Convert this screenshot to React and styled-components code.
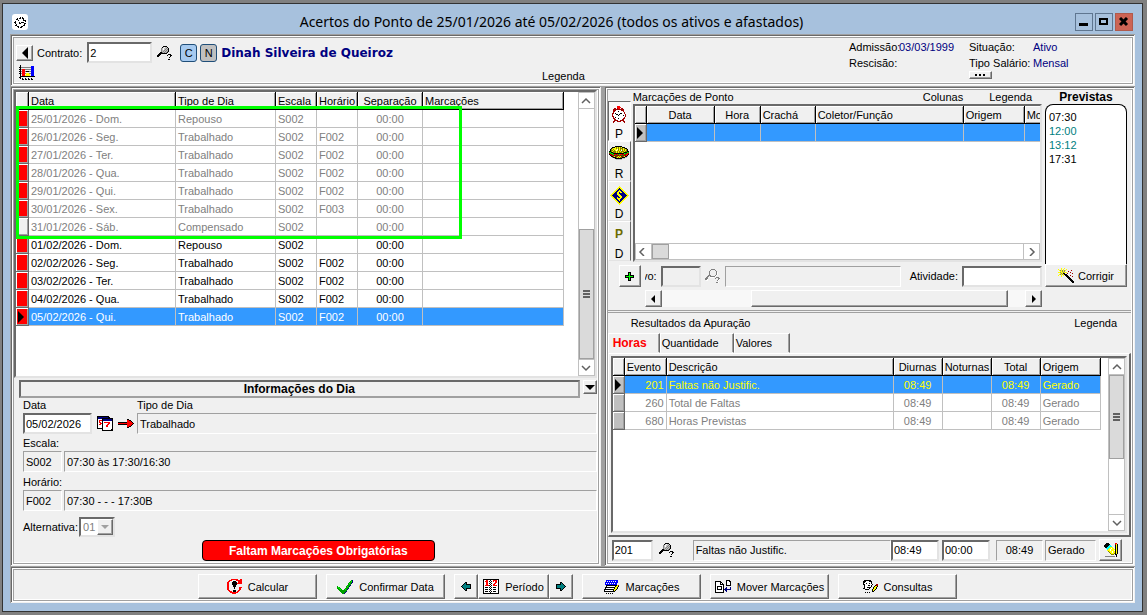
import React from "react";
import styled, { createGlobalStyle, css } from "styled-components";

const COLORS = {
  face: "#f0f0f0",
  shadow: "#a0a0a0",
  dark: "#696969",
  light: "#e3e3e3",
  white: "#ffffff",
  grid: "#c0c0c0",
  select: "#3399ff",
  navy: "#000080",
  gray: "#808080",
  red: "#ff0000",
  yellow: "#ffff00",
  frame: "#a7c1dd",
};

const DAYS = [
  ["25/01/2026 - Dom.", "Repouso", "", "muted"],
  ["26/01/2026 - Seg.", "Trabalhado", "F002", "muted"],
  ["27/01/2026 - Ter.", "Trabalhado", "F002", "muted"],
  ["28/01/2026 - Qua.", "Trabalhado", "F002", "muted"],
  ["29/01/2026 - Qui.", "Trabalhado", "F002", "muted"],
  ["30/01/2026 - Sex.", "Trabalhado", "F003", "muted"],
  ["31/01/2026 - Sáb.", "Compensado", "", "muted", true],
  ["01/02/2026 - Dom.", "Repouso", "", "normal"],
  ["02/02/2026 - Seg.", "Trabalhado", "F002", "normal"],
  ["03/02/2026 - Ter.", "Trabalhado", "F002", "normal"],
  ["04/02/2026 - Qua.", "Trabalhado", "F002", "normal"],
  ["05/02/2026 - Qui.", "Trabalhado", "F002", "selected"],
];

const RESULTS = [
  ["201", "Faltas não Justific.", "08:49", "08:49", "Gerado"],
  ["260", "Total de Faltas", "08:49", "08:49", "Gerado"],
  ["680", "Horas Previstas", "08:49", "08:49", "Gerado"],
];

const PALETTE = {
  K: "#000000",
  R: "#ff0000",
  M: "#a00000",
  W: "#ffffff",
  Y: "#ffff00",
  B: "#0000ff",
  N: "#000080",
  G: "#808080",
  S: "#c0c0c0",
  T: "#008080",
  L: "#00a000",
  E: "#00ff00",
  O: "#808000",
  C: "#00ffff",
};

const ICONS = {
  search: [
    "......KKKK......",
    ".....KSWSSK.....",
    "....GSWSSGSK....",
    "....GSWSGSGK....",
    "....GSSGSGSK....",
    "....GSGSGSGK....",
    "...KKGSGSGK.....",
    "..KKKKKKKK......",
    ".KKK.......KKK..",
    "KKK.......K..KK.",
    "KK...........K..",
    "............K...",
    "................",
    "...........KK...",
  ],
  searchOff: [
    "......GGGG......",
    ".....G....G.....",
    "....G......G....",
    "....G......GW...",
    "....G......GW...",
    "....G......GW...",
    "...GGG....GW....",
    "..GG.GGGGGW.....",
    ".GG..WWWW..GGG..",
    "GGG.......G..GG.",
    "GGW..........GW.",
    ".WW.........GW..",
    "................",
    "...........GGW..",
  ],
  chart: [
    ".K..............",
    ".K..........BBB.",
    "KKGGGGGGGGGGBBB.",
    ".K..........BBB.",
    "KKGRRRGGGGGGBBB.",
    ".K.RRR......BBB.",
    "KKGRRRGKKKGGBBB.",
    ".K.RRR......BBB.",
    "KKGRRRGYYYGGBBB.",
    ".K.RRR.YYYY.BBB.",
    ".K.RRRYYYYY.BBB.",
    ".KKKKKKKKKKKKKKK",
    "KK..............",
    ".K.K..K..K..K...",
    "...KK.KK.KK.KK..",
  ],
  clock: [
    "......RRR.......",
    "......RRRR......",
    "...MM.MRR.MM....",
    "..MMMMMMMMMMM...",
    "..MMMWWWWWMMM...",
    "..MMWWWKWWWWM...",
    "..MWWWWWWWWWWM..",
    ".MMWKWWWWKKWWM..",
    ".MWWWKKWKWWWWWM.",
    ".MWWWWWKWWWWKWM.",
    ".MMWWWWWWWWWWWM.",
    "..MWKWWWWWWWWM..",
    "..MMWWWKWWWWMM..",
    "...MMWWWWWWMM...",
    "...MMMMWWMMMM...",
    "..MM..MMMM..MM..",
    "..M..........M..",
  ],
  burger: [
    "......KKKKKKK.......",
    "...KKKYOYOYOYKKK....",
    "..KOYYYOYOYOOOYOKK..",
    ".KOYOYYYWOYOYOYOYOK.",
    ".KOOYOYWYOYOWOYOYOK.",
    "KKOYOOOYOYOYOOOYOOKK",
    "LEKKOOOYOYOOOYOKKKEL",
    "MLEEKKKKKKKKKKKELLRM",
    "KRMLERRMRLERRMRLMRRK",
    ".KMRMMLLMMRMLLMMMRK.",
    "..KKOYMMOYOYMMOYKKS.",
    "...GKKKOYOYOOKKKSS..",
    ".....SKKKKKKKSSS....",
    ".......SSSSSS.......",
  ],
  money: [
    ".........Y.........",
    "........YYY........",
    ".......YYKYY.......",
    "......YYNNNYY......",
    ".....YYNNYNNYY.....",
    "....YYNNYYYNNYY....",
    "...YYNNYYNYYNNYY...",
    "..YYNNNYYNNNNNNYY..",
    ".YYNNNNYYYNNNNNNYY.",
    "YYNNNNNNYYYNNNNNNYY",
    ".YYNNNNNNYYYNNNNYY.",
    "..YYNNNYNNYYNNNYY..",
    "...YYNNYYYYNNNYY...",
    "....YYNNYYNNNYY....",
    ".....YYNNYNNYY.....",
    "......YYNNNYY......",
    ".......YYKYY.......",
    "........YYY........",
    ".........Y.........",
  ],
  calendar: [
    "KKKKKKKKKKKK....",
    "KNNNNNNNNNNKK...",
    "KNNNNKKKKKKKKKKK",
    "KWWWWKNNNNNNNNNK",
    "KWRRRKNNNNNNNNNK",
    "KWRWWKWWWWWWWWWK",
    "KWRRWKWRRRRRRWWK",
    "KWWRRKWWWWWRRWWK",
    "KWRRWKWWWWRRWWWK",
    "KWWWWKWWWRRWWWWK",
    "KWWWWKWWWRRWWWWK",
    "KWWWWKWWWWWWWWWK",
    "KKKKKKWWWWWWWWWK",
    ".....KWWWWWWWWKK",
    ".....KKKKKKKKKKK",
  ],
  redArrow: [
    ".........KK.....",
    ".........RRKK...",
    ".........RRRRK..",
    "KKKKKKKKKRRRRRK.",
    "RRRRRRRRRRRRRRRK",
    "KKKKKKKKKRRRRRK.",
    ".........RRRRK..",
    ".........RRKK...",
    ".........KK.....",
  ],
  plus: [
    "...KKK...",
    "...KEK...",
    "...KEK...",
    "KKKKEKKKK",
    "KEEEEEEEK",
    "KKKKEKKKK",
    "...KEK...",
    "...KEK...",
    "...KKK...",
  ],
  wand: [
    "...Y..Y.........",
    "Y..Y.Y..Y.......",
    ".YGYGYGY.....M..",
    "..YYGYG...M.....",
    "YYGYYGYYY...M...",
    "..YGYKK..M....M.",
    ".YGYGYKKK.......",
    "Y..Y.Y.KKK..M...",
    "...Y....KKK...M.",
    ".........KKK....",
    "..........KKK...",
    "...........KKK..",
    "............KKK.",
    ".............KKK",
    "..............KK",
  ],
  calc: [
    "....RRRRRRR..RR",
    "..RRR....RRRRRR",
    ".RR...KKK..RRRR",
    "RR...KKKKK.RRRR",
    "RR...KKKKKRRRRR",
    "RR...KKKKK.....",
    "RR....KKK......",
    "RR....KKK......",
    "RR.....K....RRR",
    "RR.....K....RR.",
    "RR..........RR.",
    ".RR...KKK..RR..",
    "..RRR.KKK.RR...",
    "...RRRRRRRR....",
    ".....RRRR......",
  ],
  check: [
    "..............LN",
    ".............LEN",
    "............LLLN",
    "...........LELN.",
    "...........LLL..",
    "..........LLLN..",
    "L........LELN...",
    "LEL......LLL....",
    "LLEL....LLLN....",
    ".LLEL..LELN.....",
    "..LLLLLLLL......",
    "...LLLLLLN......",
    "....LLLLN.......",
    ".....LLN........",
  ],
  left: [
    "....KK....",
    "...KTK....",
    "..KTTKKKKK",
    ".KTTTTTTTK",
    "KTTTTTTTTK",
    ".KTTTTTTTK",
    "..KTTKKKKK",
    "...KTK....",
    "....KK....",
  ],
  period: [
    "KKKKKKKKKKKKKKKK",
    "KWWRRWWKWWRRRRWK",
    "KWRRRWKWKWRWRRWK",
    "KWWRRWWKWWWWRRWK",
    "KWWRRWKWKWWRRWWK",
    "KWWRRWWKWWRRWWWK",
    "KWRRRRKWKWRRRRWK",
    "KWWWWWWKWWWWWWWK",
    "KWKKKWKWKWKKKWWK",
    "KWWWWWWKWWWWWWWK",
    "KWKKKWKWKWKKKWWK",
    "KWWWWWWKWWWWWWWK",
    "KWKKKWKWKWKKKWWK",
    "KWWWWWWKWWWWWWWK",
    "KKKKKKKKKKKKKKKK",
  ],
  marks: [
    "..BBBBBBBBBBBB..",
    "..BWBWBWBWBWBB..",
    ".BBBBBBBBBBBBB..",
    ".BWBWBWBWBWBB...",
    ".BBBBBBBBBBBB...",
    "..KKKKKKKKKKKYM.",
    "..KWWWWWWWWKYYK.",
    ".KKKKKKKKKKYYK..",
    ".KWWWWWWWWKYYK..",
    "KKKKKKKKKKYYK...",
    "KWWWWWWWWKYK....",
    "KKKKKKKKKKK.....",
    "................",
    "..K.K.K.K.......",
  ],
  move: [
    "...........KKKK.",
    "KKKKKK.....KWWKK",
    "KWWWWKK....KWWWK",
    "KWWWWKWK...KWWWK",
    "KWWWWKKKK..KWWWK",
    "KWWWWWWWK..KKKKK",
    "KWKKKKKWK.......",
    "KWKWWWKWK..N...N",
    "KWKWWWKWK.NN...N",
    "KWKKKKKWKNNNNNNN",
    "KWWWWWWWK.NN....",
    "KWWWWWWWK..N....",
    "KKKKKKKKK.......",
  ],
  consult: [
    ".KKKKKKK.......",
    "KKKWWWKKK......",
    "KKWWWWWWK......",
    "KWWKWWKWK......",
    "KKWWWWWWWK...MM",
    ".KWWWKKWK...KMM",
    ".KWWWWWWK..KYYK",
    ".KWWKKKK..KYYK.",
    "KKWWWWK...KYYK.",
    "..KKKK...KYYK..",
    ".........KYK...",
    ".........KK....",
    "..K.K.K........",
  ],
  edit: [
    "..KKK......RR.",
    ".KKKKK.....MYK",
    "KKKKKCC....KYK",
    "KKKKCCCC...KYK",
    ".KKCCCYYY..KYK",
    "..CCCYYWYY.KYK",
    "...CYYWYYYYKYK",
    "...YYYWYYYWKYK",
    "....OYYYWYYKYK",
    ".....OYYWYYKYK",
    "......OYYYOKYK",
    ".......OOO.KK.",
    "............K.",
    ".GGGGGGGGGG.K.",
  ],
  gear: [
    "......K.K...",
    "...K.KK.KK..",
    "..KK.....K..",
    "....K....KKK",
    ".K.........K",
    "KK...K.KKK..",
    ".K...KK...KK",
    "..K.......K.",
    ".KK......KK.",
    "...KK..KK...",
    "....K.KK....",
  ],
};

const PixelIcon = ({ name, flip }) => {
  const rows = ICONS[name];
  const width = Math.max(...rows.map((row) => row.length));
  return (
    <svg
      width={width}
      height={rows.length}
      viewBox={`0 0 ${width} ${rows.length}`}
      shapeRendering="crispEdges"
      aria-hidden="true"
    >
      <g transform={flip ? `translate(${width} 0) scale(-1 1)` : undefined}>
        {rows.map((row, y) =>
          [...row].map((key, x) =>
            PALETTE[key] ? (
              <rect key={`${x}-${y}`} x={x} y={y} width="1" height="1" fill={PALETTE[key]} />
            ) : null
          )
        )}
      </g>
    </svg>
  );
};

const Triangle = ({ dir, size = 4, color = "#000" }) => {
  const s = size;
  const shapes = {
    right: [s, s * 2, `0,0 ${s},${s} 0,${s * 2}`],
    left: [s, s * 2, `${s},0 0,${s} ${s},${s * 2}`],
    down: [s * 2, s, `0,0 ${s * 2},0 ${s},${s}`],
  };
  const [w, h, points] = shapes[dir];
  return (
    <svg width={w} height={h} aria-hidden="true">
      <polygon points={points} fill={color} />
    </svg>
  );
};

const CHEVRONS = {
  up: "M1 6 L5 2 L9 6",
  down: "M1 2 L5 6 L9 2",
  left: "M6 0 L2 4 L6 8",
  right: "M3 0 L7 4 L3 8",
};

const Chevron = ({ dir }) => (
  <svg width="10" height="8" aria-hidden="true">
    <path d={CHEVRONS[dir]} fill="none" stroke="#606060" strokeWidth="1.5" />
  </svg>
);

const Scroll = ({ horizontal, offset, size, grip }) => (
  <ScrollBar $horizontal={horizontal}>
    <ScrollButton aria-label="Anterior">
      <Chevron dir={horizontal ? "left" : "up"} />
    </ScrollButton>
    <ScrollTrack $horizontal={horizontal}>
      <ScrollThumb $horizontal={horizontal} $offset={offset} $size={size}>
        {grip && <Grip />}
      </ScrollThumb>
    </ScrollTrack>
    <ScrollButton aria-label="Próximo">
      <Chevron dir={horizontal ? "right" : "down"} />
    </ScrollButton>
  </ScrollBar>
);

const Header = () => (
  <HeaderPanel>
    <Contract>
      <ContractRow>
        <RaisedButton $width={17} $height={16} aria-label="Voltar">
          <Triangle dir="left" size={6} />
        </RaisedButton>
        <label htmlFor="contrato">Contrato:</label>
        <Input id="contrato" $width={65} defaultValue="2" />
        <IconButton aria-label="Pesquisar contrato">
          <PixelIcon name="search" />
        </IconButton>
        <Flag $color="#a6caf0">C</Flag>
        <Flag $color="#c0c0c0">N</Flag>
        <Employee>Dinah Silveira de Queiroz</Employee>
      </ContractRow>
      <IconButton aria-label="Gráfico">
        <PixelIcon name="chart" />
      </IconButton>
    </Contract>
    <HeaderLegend>
      <TextButton>Legenda</TextButton>
    </HeaderLegend>
    <Facts>
      <dt>Admissão:</dt>
      <dd>03/03/1999</dd>
      <dt>Situação:</dt>
      <dd>Ativo</dd>
      <dt>Rescisão:</dt>
      <dd />
      <dt>Tipo Salário:</dt>
      <dd>Mensal</dd>
      <MoreButton aria-label="Mais">
        <svg width="11" height="2" aria-hidden="true">
          <path d="M0 1h2M4 1h2M8 1h2" stroke="#000" strokeWidth="2" />
        </svg>
      </MoreButton>
    </Facts>
  </HeaderPanel>
);

const DayGrid = () => (
  <GridBox $grow>
    <GridView>
      <Table $width={548}>
        <colgroup>
          {[13, 147, 100, 41, 41, 65, 141].map((w, i) => (
            <col key={i} width={w} />
          ))}
        </colgroup>
        <thead>
          <tr>
            <Th />
            <Th>Data</Th>
            <Th>Tipo de Dia</Th>
            <Th>Escala</Th>
            <Th>Horário</Th>
            <Th $align="center">Separação</Th>
            <Th>Marcações</Th>
          </tr>
        </thead>
        <tbody>
          {DAYS.map(([date, type, shift, state, clear]) => (
            <Row key={date} $state={state}>
              <Marker $color={clear ? COLORS.face : COLORS.red}>
                {state === "selected" && <Triangle dir="right" size={6} />}
              </Marker>
              <Td>{date}</Td>
              <Td>{type}</Td>
              <Td>S002</Td>
              <Td>{shift}</Td>
              <Td $align="center">00:00</Td>
              <Td />
            </Row>
          ))}
        </tbody>
      </Table>
      <Highlight />
    </GridView>
    <Scroll offset={120} size={130} grip />
  </GridBox>
);

const DayInfo = () => (
  <InfoPanel>
    <InfoBar>
      <InfoTitle>Informações do Dia</InfoTitle>
      <RaisedButton $width={14} $height={14} aria-label="Recolher">
        <Triangle dir="down" size={5} />
      </RaisedButton>
    </InfoBar>
    <InfoRow>
      <Field>
        <label htmlFor="data">Data</label>
        <Input id="data" $width={69} defaultValue="05/02/2026" />
      </Field>
      <DateTools>
        <IconButton aria-label="Calendário">
          <PixelIcon name="calendar" />
        </IconButton>
        <IconButton aria-label="Ir para data">
          <PixelIcon name="redArrow" />
        </IconButton>
      </DateTools>
      <Field $grow>
        <label htmlFor="tipo">Tipo de Dia</label>
        <ReadBox id="tipo" readOnly value="Trabalhado" />
      </Field>
    </InfoRow>
    <Field>
      <label htmlFor="escala">Escala:</label>
      <Pair>
        <ReadBox id="escala" $width={39} readOnly value="S002" />
        <ReadBox aria-label="Descrição da escala" readOnly value="07:30 às 17:30/16:30" />
      </Pair>
    </Field>
    <Field>
      <label htmlFor="horario">Horário:</label>
      <Pair>
        <ReadBox id="horario" $width={39} readOnly value="F002" />
        <ReadBox aria-label="Descrição do horário" readOnly value="07:30 - - - 17:30B" />
      </Pair>
    </Field>
    <Alternative>
      <label htmlFor="alternativa">Alternativa:</label>
      <SelectBox>
        <select id="alternativa" disabled defaultValue="01">
          <option>01</option>
        </select>
        <SelectArrow>
          <Triangle dir="down" color="#a0a0a0" />
        </SelectArrow>
      </SelectBox>
    </Alternative>
    <Warning>Faltam Marcações Obrigatórias</Warning>
  </InfoPanel>
);

const Punches = () => (
  <PunchSection>
    <PunchMain>
      <PunchBody>
        <Tools>
          <Tool $active aria-label="Ponto">
            <PixelIcon name="clock" />
            <span>P</span>
          </Tool>
          <Tool aria-label="Refeição">
            <PixelIcon name="burger" />
            <span>R</span>
          </Tool>
          <Tool aria-label="Dinheiro">
            <PixelIcon name="money" />
            <span>D</span>
          </Tool>
          <Tool aria-label="Provisório">
            <ToolLetter>P</ToolLetter>
            <span>D</span>
          </Tool>
        </Tools>
        <PunchGrid>
          <PunchTitle>
            <h2>Marcações de Ponto</h2>
            <TextButton>Colunas</TextButton>
            <TextButton>Legenda</TextButton>
          </PunchTitle>
          <GridBox $grow $column>
            <GridView>
              <Table $width={407}>
                <colgroup>
                  {[12, 68, 46, 55, 148, 61, 17].map((w, i) => (
                    <col key={i} width={w} />
                  ))}
                </colgroup>
                <thead>
                  <tr>
                    <Th />
                    <Th $align="center">Data</Th>
                    <Th $align="center">Hora</Th>
                    <Th>Crachá</Th>
                    <Th>Coletor/Função</Th>
                    <Th>Origem</Th>
                    <Th>Mo</Th>
                  </tr>
                </thead>
                <tbody>
                  <Row $state="selected">
                    <Marker $color={COLORS.grid}>
                      <Triangle dir="right" size={6} />
                    </Marker>
                    <Td />
                    <Td />
                    <Td />
                    <Td />
                    <Td />
                    <Td />
                  </Row>
                </tbody>
              </Table>
            </GridView>
            <Scroll horizontal offset={0} size={17} />
          </GridBox>
        </PunchGrid>
      </PunchBody>
      <PunchForm>
        <RaisedButton $width={22} $height={22} aria-label="Adicionar">
          <PixelIcon name="plus" />
        </RaisedButton>
        <ClippedLabel htmlFor="motivo">vo:</ClippedLabel>
        <Input id="motivo" $width={40} disabled />
        <IconButton aria-label="Pesquisar motivo" disabled>
          <PixelIcon name="searchOff" />
        </IconButton>
        <ReadBox aria-label="Descrição do motivo" readOnly value="" />
        <ActivityLabel htmlFor="atividade">Atividade:</ActivityLabel>
        <Input id="atividade" $width={80} defaultValue="" />
      </PunchForm>
      <ClassicScroll>
        <RaisedButton $width={17} $height={17} aria-label="Rolar para a esquerda">
          <Triangle dir="left" />
        </RaisedButton>
        <ClassicTrack>
          <ClassicThumb />
        </ClassicTrack>
        <RaisedButton $width={17} $height={17} aria-label="Rolar para a direita">
          <Triangle dir="right" />
        </RaisedButton>
      </ClassicScroll>
    </PunchMain>
    <Expected>
      <h2>Previstas</h2>
      <ExpectedList>
        <li>07:30</li>
        <TealItem>12:00</TealItem>
        <TealItem>13:12</TealItem>
        <li>17:31</li>
      </ExpectedList>
      <RaisedButton $height={23}>
        <PixelIcon name="wand" />
        Corrigir
      </RaisedButton>
    </Expected>
  </PunchSection>
);

const Results = () => (
  <ResultSection>
    <ResultTitle>
      <h2>Resultados da Apuração</h2>
      <TextButton>Legenda</TextButton>
    </ResultTitle>
    <Tabs role="tablist">
      <Tab role="tab" aria-selected="true" $active $width={52}>
        Horas
      </Tab>
      <Tab role="tab" $width={74}>
        Quantidade
      </Tab>
      <Tab role="tab" $width={56}>
        Valores
      </Tab>
    </Tabs>
    <TabPane>
      <GridBox $grow>
        <GridView>
          <Table $width={488}>
            <colgroup>
              {[12, 42, 227, 49, 49, 49, 60].map((w, i) => (
                <col key={i} width={w} />
              ))}
            </colgroup>
            <thead>
              <tr>
                <Th />
                <Th>Evento</Th>
                <Th>Descrição</Th>
                <Th $align="center">Diurnas</Th>
                <Th $align="center">Noturnas</Th>
                <Th $align="center">Total</Th>
                <Th>Origem</Th>
              </tr>
            </thead>
            <tbody>
              {RESULTS.map(([id, text, day, total, origin], i) => (
                <Row key={id} $state={i === 0 ? "result" : "muted"}>
                  <Marker $color={COLORS.grid}>
                    {i === 0 && <Triangle dir="right" size={6} />}
                  </Marker>
                  <Td $align="right">{id}</Td>
                  <Td>{text}</Td>
                  <Td $align="center">{day}</Td>
                  <Td />
                  <Td $align="center">{total}</Td>
                  <Td>{origin}</Td>
                </Row>
              ))}
            </tbody>
          </Table>
        </GridView>
        <Scroll offset={0} size={84} grip />
      </GridBox>
    </TabPane>
    <ResultForm>
      <Input aria-label="Evento" $width={41} defaultValue="201" />
      <ResultSearch aria-label="Pesquisar evento">
        <PixelIcon name="search" />
      </ResultSearch>
      <ReadBox aria-label="Descrição do evento" readOnly value="Faltas não Justific." />
      <ResultHours>
        <Input aria-label="Diurnas" $width={48} defaultValue="08:49" />
        <Input aria-label="Noturnas" $width={48} defaultValue="00:00" />
      </ResultHours>
      <ResultTotals>
        <ReadBox aria-label="Total" $width={47} $center readOnly value="08:49" />
        <ReadBox aria-label="Origem" $width={51} readOnly value="Gerado" />
      </ResultTotals>
      <RaisedButton $width={23} $height={22} aria-label="Editar">
        <PixelIcon name="edit" />
      </RaisedButton>
    </ResultForm>
  </ResultSection>
);

const Footer = () => (
  <FooterPanel>
    <FooterButton>
      <PixelIcon name="calc" />
      Calcular
    </FooterButton>
    <FooterButton>
      <PixelIcon name="check" />
      Confirmar Data
    </FooterButton>
    <ButtonGroup>
      <FooterButton $width={24} aria-label="Período anterior">
        <PixelIcon name="left" />
      </FooterButton>
      <FooterButton $width={71}>
        <PixelIcon name="period" />
        Período
      </FooterButton>
      <FooterButton $width={24} aria-label="Próximo período">
        <PixelIcon name="left" flip />
      </FooterButton>
    </ButtonGroup>
    <FooterButton>
      <PixelIcon name="marks" />
      Marcações
    </FooterButton>
    <FooterButton>
      <PixelIcon name="move" />
      Mover Marcações
    </FooterButton>
    <FooterButton>
      <PixelIcon name="consult" />
      Consultas
    </FooterButton>
  </FooterPanel>
);

const App = () => {
  return (
    <Desktop>
      <GlobalStyle />
      <Window>
        <TitleBar>
          <AppIcon>
            <PixelIcon name="gear" />
          </AppIcon>
          <h1>Acertos do Ponto de 25/01/2026 até 05/02/2026 (todos os ativos e afastados)</h1>
          <WindowButtons>
            <WindowButton aria-label="Minimizar">
              <svg width="10" height="10" aria-hidden="true">
                <path d="M0 7.5h9" stroke="#000" strokeWidth="3" />
              </svg>
            </WindowButton>
            <WindowButton aria-label="Maximizar">
              <svg width="10" height="10" aria-hidden="true">
                <rect x="1" y="2" width="7" height="5" fill="none" stroke="#000" strokeWidth="2" />
              </svg>
            </WindowButton>
            <WindowButton $close aria-label="Fechar">
              <svg width="10" height="10" aria-hidden="true">
                <path d="M1 1 L8 8 M8 1 L1 8" stroke="#000" strokeWidth="3" />
              </svg>
            </WindowButton>
          </WindowButtons>
        </TitleBar>
        <Client>
          <Header />
          <Main>
            <LeftPanel>
              <DayGrid />
              <DayInfo />
            </LeftPanel>
            <RightPanel>
              <Punches />
              <Results />
            </RightPanel>
          </Main>
          <Footer />
        </Client>
      </Window>
    </Desktop>
  );
};

export default App;

const sunken = css`
  border: 2px solid;
  border-color: ${COLORS.dark} ${COLORS.light} ${COLORS.light} ${COLORS.dark};
`;

const raised = css`
  border: 1px solid;
  border-color: ${COLORS.white} ${COLORS.dark} ${COLORS.dark} ${COLORS.white};
  box-shadow: inset -1px -1px 0 ${COLORS.shadow};
`;

const GlobalStyle = createGlobalStyle`
  * {
    box-sizing: border-box;
  }
  body {
    margin: 0;
    background: ${COLORS.gray};
    color: #000;
    font: 11px/14px "Liberation Sans", Arial, sans-serif;
  }
  h1, h2, dl, dd, ul {
    margin: 0;
    padding: 0;
    font: inherit;
    list-style: none;
  }
  button, input, select {
    margin: 0;
    padding: 0;
    border: 0;
    border-radius: 0;
    background: none;
    color: inherit;
    font: inherit;
  }
  svg {
    display: block;
    flex: none;
  }
`;

const Desktop = styled.div`
  display: flex;
  min-height: 100vh;
  padding: 3px 4px 3px 2px;
  background: ${COLORS.gray};
`;

const Window = styled.div`
  flex: 1;
  min-width: 0;
  display: flex;
  flex-direction: column;
  padding: 0 7px 8px;
  border: 1px solid #333;
  background: ${COLORS.frame};
`;

const TitleBar = styled.header`
  display: flex;
  align-items: center;
  height: 30px;
  padding: 6px 2px 0;
  h1 {
    flex: 1;
    text-align: center;
    font: 14px/20px "Noto Sans", "Open Sans", sans-serif;
  }
`;

const AppIcon = styled.span`
  display: flex;
  align-items: center;
  justify-content: center;
  width: 16px;
  height: 16px;
  border-radius: 3px;
  background: ${COLORS.white};
`;

const WindowButtons = styled.div`
  display: flex;
  gap: 2px;
`;

const WindowButton = styled.button`
  display: flex;
  align-items: center;
  justify-content: center;
  width: 18px;
  height: 18px;
  border: 1px solid ${(p) => (p.$close ? "#b05a4c" : "#5f7690")};
  background: ${(p) => (p.$close ? "#cd6455" : COLORS.frame)};
`;

const Client = styled.main`
  flex: 1;
  display: flex;
  flex-direction: column;
  background: ${COLORS.face};
`;

const Panel = styled.section`
  padding: 4px;
  box-shadow: inset 1px 1px 0 ${COLORS.shadow}, inset -1px -1px 0 ${COLORS.face},
    inset 2px 2px 0 ${COLORS.dark}, inset -2px -2px 0 ${COLORS.white},
    inset 3px 3px 0 ${COLORS.white}, inset -3px -3px 0 ${COLORS.shadow},
    inset 4px 4px 0 ${COLORS.shadow}, inset -4px -4px 0 ${COLORS.white};
`;

const HeaderPanel = styled(Panel)`
  display: flex;
  height: 52px;
`;

const Main = styled.div`
  flex: 1;
  display: flex;
`;

const LeftPanel = styled(Panel)`
  flex: 590 1 0;
  min-width: 0;
  display: flex;
  flex-direction: column;
`;

const RightPanel = styled(Panel)`
  flex: 530 1 0;
  min-width: 0;
  display: flex;
  flex-direction: column;
  border-left: 3px solid ${COLORS.shadow};
`;

const FooterPanel = styled(Panel)`
  display: flex;
  gap: 9px;
  height: 37px;
  padding: 8px 4px 4px 188px;
`;

const RaisedButton = styled.button`
  ${raised}
  flex: none;
  display: flex;
  align-items: center;
  justify-content: center;
  gap: 4px;
  width: ${(p) => (p.$width ? `${p.$width}px` : "auto")};
  height: ${(p) => p.$height}px;
  background: ${COLORS.face};
`;

const FooterButton = styled(RaisedButton)`
  gap: 6px;
  width: ${(p) => p.$width || 119}px;
  height: 25px;
`;

const ButtonGroup = styled.div`
  display: flex;
`;

const IconButton = styled.button`
  display: flex;
  align-items: center;
  justify-content: center;
`;

const TextButton = styled.button`
  line-height: 14px;
`;

const Input = styled.input`
  ${sunken}
  flex: none;
  width: ${(p) => p.$width}px;
  height: 21px;
  padding: 0 0 0 1px;
  background: ${(p) => (p.disabled ? COLORS.face : COLORS.white)};
`;

const ReadBox = styled.input`
  flex: ${(p) => (p.$width ? "none" : "1")};
  min-width: 0;
  width: ${(p) => (p.$width ? `${p.$width}px` : "auto")};
  height: 21px;
  padding: 0 2px;
  border: 1px solid;
  border-color: ${COLORS.shadow} ${COLORS.white} ${COLORS.white} ${COLORS.shadow};
  text-align: ${(p) => (p.$center ? "center" : "left")};
`;

const Contract = styled.div`
  flex: 0 0 528px;
  padding: 4px 0 0 2px;
  > button {
    padding: 2px 0 0 3px;
  }
`;

const ContractRow = styled.div`
  display: flex;
  align-items: center;
  height: 21px;
  label {
    padding: 0 5px 0 4px;
  }
  ${IconButton} {
    padding: 0 7px 0 5px;
  }
`;

const Flag = styled.span`
  width: 17px;
  height: 18px;
  margin-right: 3px;
  border: 1px solid #1f4e79;
  border-radius: 3px;
  background: ${(p) => p.$color};
  text-align: center;
  line-height: 16px;
`;

const Employee = styled.strong`
  padding-left: 1px;
  color: ${COLORS.navy};
  font: bold 12px/16px "DejaVu Sans", Verdana, sans-serif;
`;

const HeaderLegend = styled.div`
  flex: 1;
  padding-top: 31px;
`;

const Facts = styled.dl`
  display: grid;
  grid-template-columns: 50px 70px 64px 98px;
  grid-template-rows: 16px 16px 9px;
  line-height: 16px;
  padding-top: 1px;
  dd {
    color: ${COLORS.navy};
  }
`;

const MoreButton = styled.button`
  ${raised}
  grid-column: 3;
  display: flex;
  align-items: center;
  justify-content: center;
  width: 23px;
  height: 8px;
`;

const GridBox = styled.div`
  ${sunken}
  flex: ${(p) => (p.$grow ? "1" : "none")};
  min-width: 0;
  display: flex;
  flex-direction: ${(p) => (p.$column ? "column" : "row")};
  background: ${COLORS.white};
`;

const GridView = styled.div`
  position: relative;
  flex: 1;
  min-width: 0;
  overflow: hidden;
`;

const Table = styled.table`
  table-layout: fixed;
  width: ${(p) => p.$width}px;
  border-collapse: separate;
  border-spacing: 0;
`;

const Th = styled.th`
  height: 18px;
  padding: 0 2px;
  border-right: 1px solid #000;
  border-bottom: 1px solid #000;
  box-shadow: inset 1px 1px 0 ${COLORS.white}, inset -1px -1px 0 ${COLORS.shadow};
  background: ${COLORS.face};
  font-weight: normal;
  text-align: ${(p) => p.$align || "left"};
  white-space: nowrap;
`;

const Td = styled.td`
  height: 18px;
  padding: 0 2px;
  border-right: 1px solid ${COLORS.grid};
  border-bottom: 1px solid ${COLORS.grid};
  text-align: ${(p) => p.$align || "left"};
  white-space: nowrap;
`;

const ROW_STATES = {
  normal: ["transparent", "#000"],
  muted: ["transparent", COLORS.gray],
  selected: [COLORS.select, COLORS.white],
  result: [COLORS.select, COLORS.yellow],
};

const Row = styled.tr`
  color: ${(p) => ROW_STATES[p.$state][1]};
  ${Td} {
    background: ${(p) => ROW_STATES[p.$state][0]};
  }
`;

const Marker = styled(Td)`
  && {
    border-color: ${COLORS.dark};
    box-shadow: inset 1px 1px 0 ${COLORS.white}, inset -1px -1px 0 ${COLORS.shadow};
    background: ${(p) => p.$color};
  }
`;

const Highlight = styled.div`
  position: absolute;
  top: 14px;
  left: 0;
  width: 446px;
  height: 133px;
  border: 3px solid #00ff00;
  pointer-events: none;
`;

const ScrollBar = styled.div`
  flex: none;
  display: flex;
  flex-direction: ${(p) => (p.$horizontal ? "row" : "column")};
  background: ${COLORS.white};
`;

const ScrollButton = styled.button`
  flex: none;
  display: flex;
  align-items: center;
  justify-content: center;
  width: 17px;
  height: 17px;
  border: 1px solid ${COLORS.grid};
`;

const ScrollTrack = styled.div`
  flex: 1;
  border: 0 solid ${COLORS.grid};
  border-width: ${(p) => (p.$horizontal ? "1px 0" : "0 1px")};
`;

const ScrollThumb = styled.div`
  display: flex;
  align-items: center;
  justify-content: center;
  width: ${(p) => (p.$horizontal ? `${p.$size}px` : "auto")};
  height: ${(p) => (p.$horizontal ? "15px" : `${p.$size}px`)};
  margin-top: ${(p) => p.$offset}px;
  border: 1px solid ${COLORS.shadow};
  background: #dadada;
`;

const Grip = styled.span`
  width: 7px;
  height: 8px;
  background: repeating-linear-gradient(#606060 0 2px, transparent 2px 3px);
`;

const InfoPanel = styled.div`
  display: flex;
  flex-direction: column;
  gap: 3px;
  padding: 2px 0 1px;
`;

const InfoBar = styled.div`
  display: flex;
  gap: 3px;
  padding-left: 5px;
  margin-bottom: -3px;
`;

const InfoTitle = styled.h2`
  && {
    flex: 1;
    height: 18px;
    border: 2px solid;
    border-color: ${COLORS.dark} ${COLORS.shadow} ${COLORS.shadow} ${COLORS.dark};
    font-size: 12px;
    font-weight: bold;
    line-height: 14px;
    text-align: center;
  }
`;

const InfoRow = styled.div`
  display: flex;
  margin-bottom: -1px;
`;

const Field = styled.div`
  flex: ${(p) => (p.$grow ? "1" : "none")};
  min-width: 0;
  display: flex;
  flex-direction: column;
  gap: 1px;
  padding-left: ${(p) => (p.$grow ? 0 : 9)}px;
  > input {
    flex: none;
  }
`;

const Pair = styled.div`
  display: flex;
  gap: 2px;
`;

const DateTools = styled.div`
  display: flex;
  align-items: center;
  gap: 5px;
  padding: 14px 3px 0 5px;
`;

const Alternative = styled.div`
  display: flex;
  align-items: center;
  gap: 1px;
  padding: 3px 0 0 9px;
`;

const SelectBox = styled.div`
  ${sunken}
  position: relative;
  width: 36px;
  height: 20px;
  background: ${COLORS.white};
  color: ${COLORS.gray};
  select {
    width: 100%;
    height: 16px;
    padding-left: 2px;
    appearance: none;
    opacity: 1;
  }
`;

const SelectArrow = styled.span`
  ${raised}
  position: absolute;
  top: 0;
  right: 0;
  display: flex;
  align-items: center;
  justify-content: center;
  width: 16px;
  height: 16px;
  background: ${COLORS.face};
  pointer-events: none;
`;

const Warning = styled.button`
  align-self: center;
  width: 233px;
  height: 21px;
  margin-left: 26px;
  border: 1px solid #000;
  border-radius: 4px;
  background: ${COLORS.red};
  color: ${COLORS.white};
  font-size: 12px;
  font-weight: bold;
`;

const PunchSection = styled.div`
  display: flex;
  gap: 3px;
  height: 221px;
  padding-right: 4px;
  border-bottom: 1px solid ${COLORS.shadow};
`;

const PunchMain = styled.div`
  flex: 1;
  min-width: 0;
  display: flex;
  flex-direction: column;
`;

const PunchBody = styled.div`
  display: flex;
  gap: 2px;
  height: 172px;
`;

const Tools = styled.div`
  flex: none;
  width: 23px;
  margin-top: 11px;
`;

const Tool = styled.button`
  display: flex;
  flex-direction: column;
  align-items: center;
  justify-content: space-between;
  width: 23px;
  height: 40px;
  padding-top: 4px;
  border: 1px solid;
  border-color: ${COLORS.white} ${COLORS.dark} ${COLORS.light} ${COLORS.white};
  font-size: 12px;
  line-height: 11px;
  ${(p) =>
    p.$active &&
    css`
      border-color: ${COLORS.dark} ${COLORS.white} ${COLORS.white} ${COLORS.dark};
      background: #f8f8f8;
    `}
`;

const ToolLetter = styled.b`
  color: #6b6b00;
  line-height: 16px;
`;

const PunchGrid = styled.div`
  flex: 1;
  min-width: 0;
  display: flex;
  flex-direction: column;
`;

const PunchTitle = styled.div`
  display: flex;
  gap: 26px;
  padding-right: 10px;
  h2 {
    flex: 1;
  }
`;

const PunchForm = styled.div`
  display: flex;
  align-items: center;
  gap: 4px;
  height: 22px;
  margin-top: 3px;
  padding-left: 11px;
`;

const ClippedLabel = styled.label`
  display: flex;
  justify-content: flex-end;
  width: 12px;
  overflow: hidden;
`;

const ActivityLabel = styled.label`
  padding-left: 5px;
`;

const ClassicScroll = styled.div`
  display: flex;
  margin: 3px 0 0 37px;
`;

const ClassicTrack = styled.div`
  flex: 1;
  padding: 0 17px 0 89px;
  background: #f8f8f8;
`;

const ClassicThumb = styled.div`
  ${raised}
  height: 17px;
  background: ${COLORS.face};
`;

const Expected = styled.div`
  flex: none;
  display: flex;
  flex-direction: column;
  width: 82px;
  height: 197px;
  h2 {
    font-size: 12px;
    font-weight: bold;
    line-height: 14px;
    text-align: center;
  }
`;

const ExpectedList = styled.ul`
  && {
    flex: 1;
    padding: 5px 3px;
    border: 1px solid #000;
    border-bottom: 0;
    border-radius: 8px 8px 0 0;
    background: ${COLORS.white};
  }
`;

const TealItem = styled.li`
  color: #008080;
`;

const ResultSection = styled.div`
  flex: 1;
  display: flex;
  flex-direction: column;
  margin-top: 1px;
  border-top: 1px solid ${COLORS.shadow};
`;

const ResultTitle = styled.div`
  display: flex;
  justify-content: space-between;
  padding: 3px 14px 3px 23px;
`;

const Tabs = styled.div`
  display: flex;
  height: 20px;
`;

const Tab = styled.button`
  width: ${(p) => p.$width}px;
  padding-left: ${(p) => (p.$active ? 4 : 1)}px;
  border: 1px solid;
  border-color: ${COLORS.white} ${COLORS.dark} transparent ${COLORS.white};
  box-shadow: inset -1px 0 0 ${COLORS.shadow};
  color: ${(p) => (p.$active ? COLORS.red : "#000")};
  font-size: ${(p) => (p.$active ? 12 : 11)}px;
  font-weight: ${(p) => (p.$active ? "bold" : "normal")};
  text-align: left;
`;

const TabPane = styled.div`
  flex: 1;
  display: flex;
  padding: 2px;
  border: solid;
  border-width: 1px 2px 2px 1px;
  border-color: ${COLORS.white} ${COLORS.dark} ${COLORS.dark} ${COLORS.white};
`;

const ResultForm = styled.div`
  display: flex;
  align-items: center;
  height: 25px;
  padding: 1px 9px 0 4px;
`;

const ResultSearch = styled(IconButton)`
  padding: 0 18px 0 6px;
`;

const ResultHours = styled.div`
  display: flex;
  gap: 3px;
`;

const ResultTotals = styled.div`
  display: flex;
  gap: 2px;
  padding: 0 3px 0 6px;
`;
